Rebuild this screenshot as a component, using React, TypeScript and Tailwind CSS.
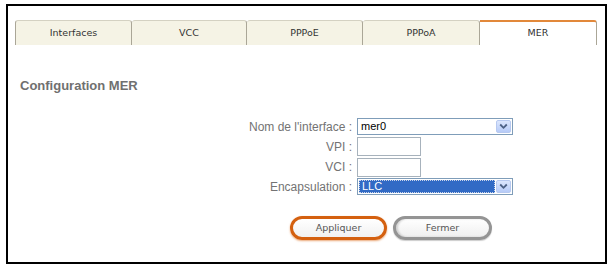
import React from "react";

const tabs = [
  { label: "Interfaces", w: 117 },
  { label: "VCC", w: 115 },
  { label: "PPPoE", w: 116 },
  { label: "PPPoA", w: 117 },
  { label: "MER", w: 117, active: true },
];

function Arrow() {
  return (
    <div className="absolute right-[1px] top-[1px] bottom-[1px] w-[15px] rounded-[2px] border border-[#b7c9f0] bg-gradient-to-b from-[#dce6fd] to-[#b6cbf8] flex items-center justify-center">
      <svg width="9" height="7" viewBox="0 0 9 7">
        <path d="M1.2 1.5 L4.5 4.8 L7.8 1.5" fill="none" stroke="#4d6185" strokeWidth="1.8" />
      </svg>
    </div>
  );
}

function Select({ value, focused }: { value: string; focused?: boolean }) {
  return (
    <div className="relative w-[156px] h-[17px] border border-[#7f9db9] bg-white text-[11px] leading-[15px] text-black" style={{ fontFamily: '"Liberation Sans", Arial, sans-serif' }}>
      {focused ? (
        <div className="absolute left-[1px] top-[1px] bottom-[1px] right-[17px] bg-[#316ac5] border border-dotted border-[#c9d4ea] text-white pl-[2px] leading-[11px]">
          {value}
        </div>
      ) : (
        <div className="pl-[3px]">{value}</div>
      )}
      <Arrow />
    </div>
  );
}

function Input() {
  return <div className="w-[64px] h-[19px] border border-[#a7b2bc] bg-white" />;
}

function Row({ label, children, h }: { label: string; children: React.ReactNode; h: string }) {
  return (
    <div className={`flex items-center ${h}`}>
      <div className="w-[349px] pr-[5px] text-right text-[12px] text-[#737373] leading-[14px]">{label}</div>
      {children}
    </div>
  );
}

export default function App() {
  return (
    <div className="w-[612px] h-[268px] bg-white pt-[4px] pl-[6px]" style={{ fontFamily: '"Liberation Sans", Arial, sans-serif' }}>
      <div className="w-[601px] h-[260px] border-2 border-black bg-white">
        <div className="flex ml-[7px] mt-[14px] h-[25px]" style={{ fontFamily: '"DejaVu Sans", Verdana, sans-serif' }}>
          {tabs.map((t, i) =>
            t.active ? (
              <div
                key={t.label}
                style={{ width: t.w }}
                className="h-[25px] bg-white border-t-2 border-t-[#e2883a] border-r border-r-[#aaa697] rounded-tr-[3px] flex items-center justify-center text-[9.5px] text-[#333]"
              >
                {t.label}
              </div>
            ) : (
              <div
                key={t.label}
                style={{ width: t.w }}
                className={`h-[25px] bg-[#f5f3e5] border-t border-t-[#d4d1c2] border-r border-r-[#aaa697] ${i === 0 ? "border-l border-l-[#aaa697]" : ""} rounded-t-[3px] flex items-center justify-center text-[9.5px] text-[#333]`}
              >
                {t.label}
              </div>
            )
          )}
        </div>

        <div className="ml-[12px] mt-[33px] text-[13px] leading-[15px] font-bold text-[#707070]">Configuration MER</div>

        <div className="mt-[24px] flex flex-col">
          <Row label="Nom de l'interface :" h="h-[19px]">
            <Select value="mer0" />
          </Row>
          <Row label="VPI :" h="h-[21px]">
            <Input />
          </Row>
          <Row label="VCI :" h="h-[20px]">
            <Input />
          </Row>
          <Row label="Encapsulation :" h="h-[19px]">
            <Select value="LLC" focused />
          </Row>
        </div>

        <div className="mt-[20px] ml-[282px] flex gap-[6px]" style={{ fontFamily: '"DejaVu Sans", Verdana, sans-serif' }}>
          <div className="w-[97px] h-[24px] rounded-full border-[3px] border-[#d4600f] bg-gradient-to-b from-white to-[#f1f1f1] shadow-[0_1px_2px_rgba(220,110,30,0.6)] flex items-center justify-center text-[9.5px] text-[#555]">
            Appliquer
          </div>
          <div className="w-[99px] h-[24px] rounded-full border-[3px] border-[#949494] bg-gradient-to-b from-white to-[#efefef] shadow-[inset_2px_0_2px_rgba(0,0,0,0.15),0_1px_1px_rgba(0,0,0,0.2)] flex items-center justify-center text-[9.5px] text-[#555]">
            Fermer
          </div>
        </div>
      </div>
    </div>
  );
}
